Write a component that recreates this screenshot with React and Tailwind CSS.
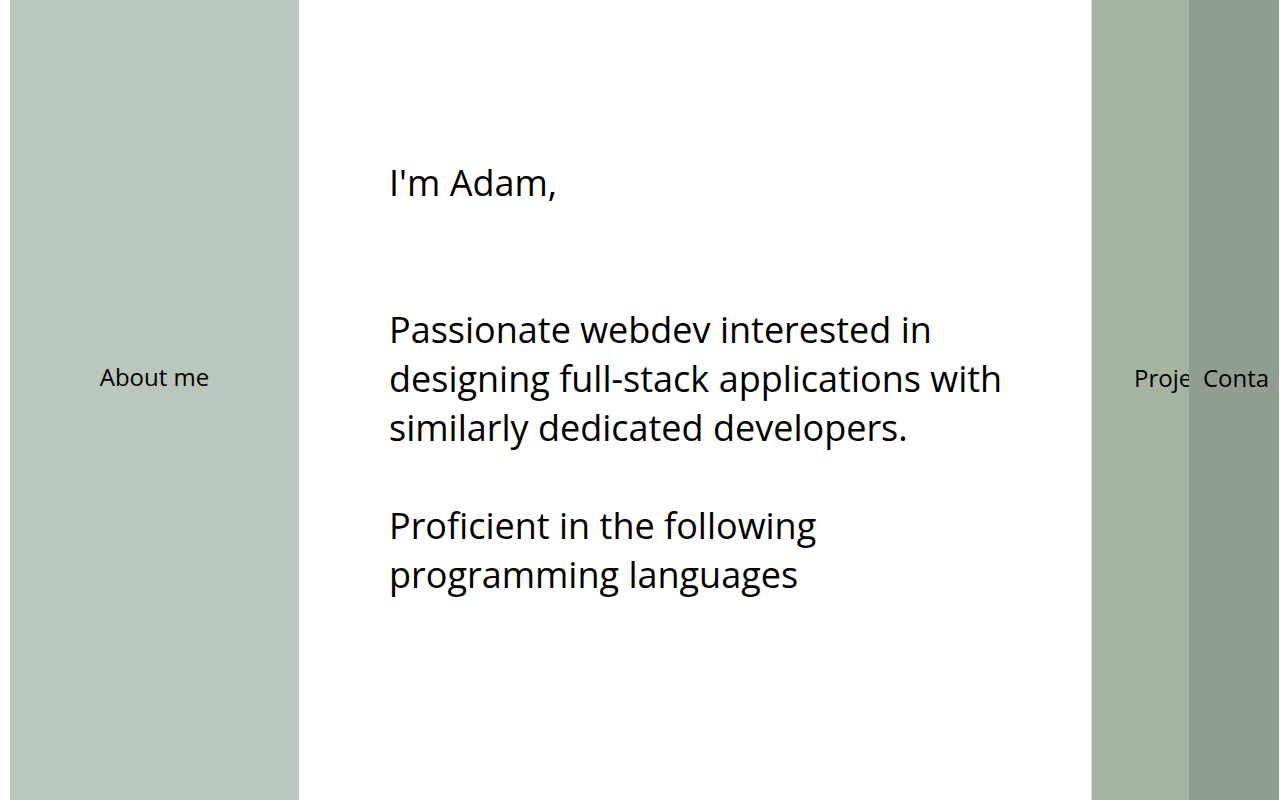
export default function App() {
  return (
    <div className="flex h-screen overflow-hidden bg-white pl-[10px] pr-px font-['Open_Sans',sans-serif] text-black">
      <nav className="flex shrink-0 text-2xl">
        <a href="#about" className="flex w-[289px] items-center justify-center bg-[#b8c6bc] pb-[46px]">
          About me
        </a>
      </nav>
      <main className="flex min-w-0 flex-1 flex-col justify-center pr-[80px] pl-[90px] pb-[44px] text-4xl leading-[49px]">
        <h1 className="mb-[98px]">I'm Adam,</h1>
        <p className="mb-[49px]">
          Passionate webdev interested in designing full-stack applications with similarly dedicated developers.
        </p>
        <p className="pr-[90px]">Proficient in the following programming languages</p>
      </main>
      <nav className="flex shrink-0 text-2xl">
        <a href="#projects" className="flex w-[98px] items-center overflow-hidden border-l border-[#d1dad0] bg-[#a4b4a1] pb-[44px] pl-[42px]">
          Projects
        </a>
        <a href="#contact" className="flex w-[90px] items-center bg-[#909e91] px-[14px] pb-[44px]">
          Conta
        </a>
      </nav>
    </div>
  );
}
